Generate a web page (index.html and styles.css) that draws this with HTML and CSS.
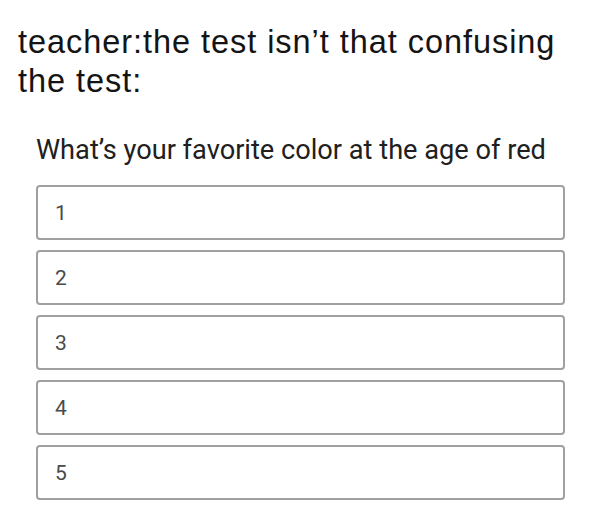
FILE: index.html
```html
<!DOCTYPE html>
<html>
<head>
<meta charset="utf-8">
<link rel="stylesheet" href="styles.css">
</head>
<body>
<div class="page">
  <p class="caption">teacher:the test isn’t that confusing<br>the test:</p>
  <div class="quiz">
    <h2 class="question">What’s your favorite color at the age of red</h2>
    <div class="options">
      <div class="option">1</div>
      <div class="option">2</div>
      <div class="option">3</div>
      <div class="option">4</div>
      <div class="option">5</div>
    </div>
  </div>
</div>
</body>
</html>
```

FILE: styles.css
```css
html, body {
  margin: 0;
  padding: 0;
  background: #ffffff;
}
.page {
  width: 610px;
  height: 530px;
  overflow: hidden;
  padding: 23px 0 0 18px;
  box-sizing: border-box;
}
.caption {
  margin: 0;
  font-family: "Liberation Sans", Arial, sans-serif;
  font-size: 32.5px;
  line-height: 39px;
  color: #141414;
  letter-spacing: 0.95px;
}
.quiz {
  margin: 31px 0 0 18px;
  width: 529px;
}
.question {
  margin: 0;
  font-family: Roboto, "Noto Sans", sans-serif;
  font-weight: 400;
  font-size: 27.2px;
  line-height: 36px;
  color: #202020;
}
.options {
  margin-top: 17px;
  display: flex;
  flex-direction: column;
  gap: 10px;
}
.option {
  height: 55px;
  box-sizing: border-box;
  border: 2px solid #a0a0a0;
  border-radius: 4px;
  padding-left: 17px;
  display: flex;
  align-items: center;
  font-family: Roboto, "Noto Sans", sans-serif;
  font-size: 21px;
  color: #4a4a4a;
}
```
